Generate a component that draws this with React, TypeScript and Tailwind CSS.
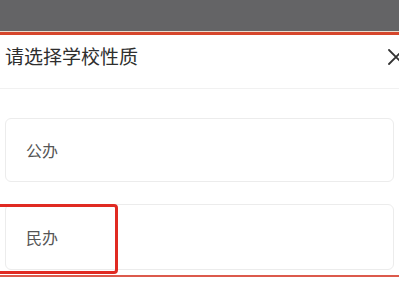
export default function App() {
  return (
    <div
      className="relative flex h-[300px] w-[399px] flex-col overflow-hidden bg-white"
      style={{ fontFamily: '"Noto Sans CJK SC", "Noto Sans", sans-serif' }}
    >
      {/* dimmed page behind the sheet */}
      <div className="h-[31px] bg-[#646466]" />
      <div className="h-[1px] bg-[#e9dccd]" />
      <div className="h-[3px] bg-[#d6462c]" />

      <div className="flex h-[54px] items-start justify-between border-b border-[#f1f1f1] pl-[5px] pt-[11px]">
        <span className="text-[19px] leading-none text-[#2e2e2e]">请选择学校性质</span>
        <svg
          className="mr-[-7px] mt-[1px] shrink-0"
          width="20"
          height="20"
          viewBox="0 0 20 20"
          fill="none"
          stroke="#333"
          strokeWidth="1.8"
          strokeLinecap="round"
        >
          <path d="M3 3 L17 17 M17 3 L3 17" />
        </svg>
      </div>

      <div className="mx-[5px] mt-[29px] flex h-[64px] items-center rounded-md border border-[#ececec] pl-[20px]">
        <span className="text-[16px] text-[#555]">公办</span>
      </div>

      <div className="relative mx-[5px] mt-[22px] flex h-[66px] items-center rounded-md border border-[#ececec] pl-[20px]">
        <span className="text-[16px] text-[#555]">民办</span>
        {/* highlight annotation */}
        <div className="absolute left-[-13px] top-[-1px] h-[70px] w-[125px] rounded-[4px] border-[3px] border-[#e02a22]" />
      </div>

      <div className="mt-[5px] h-[2px] bg-[#dc5a4c]" />
    </div>
  );
}
